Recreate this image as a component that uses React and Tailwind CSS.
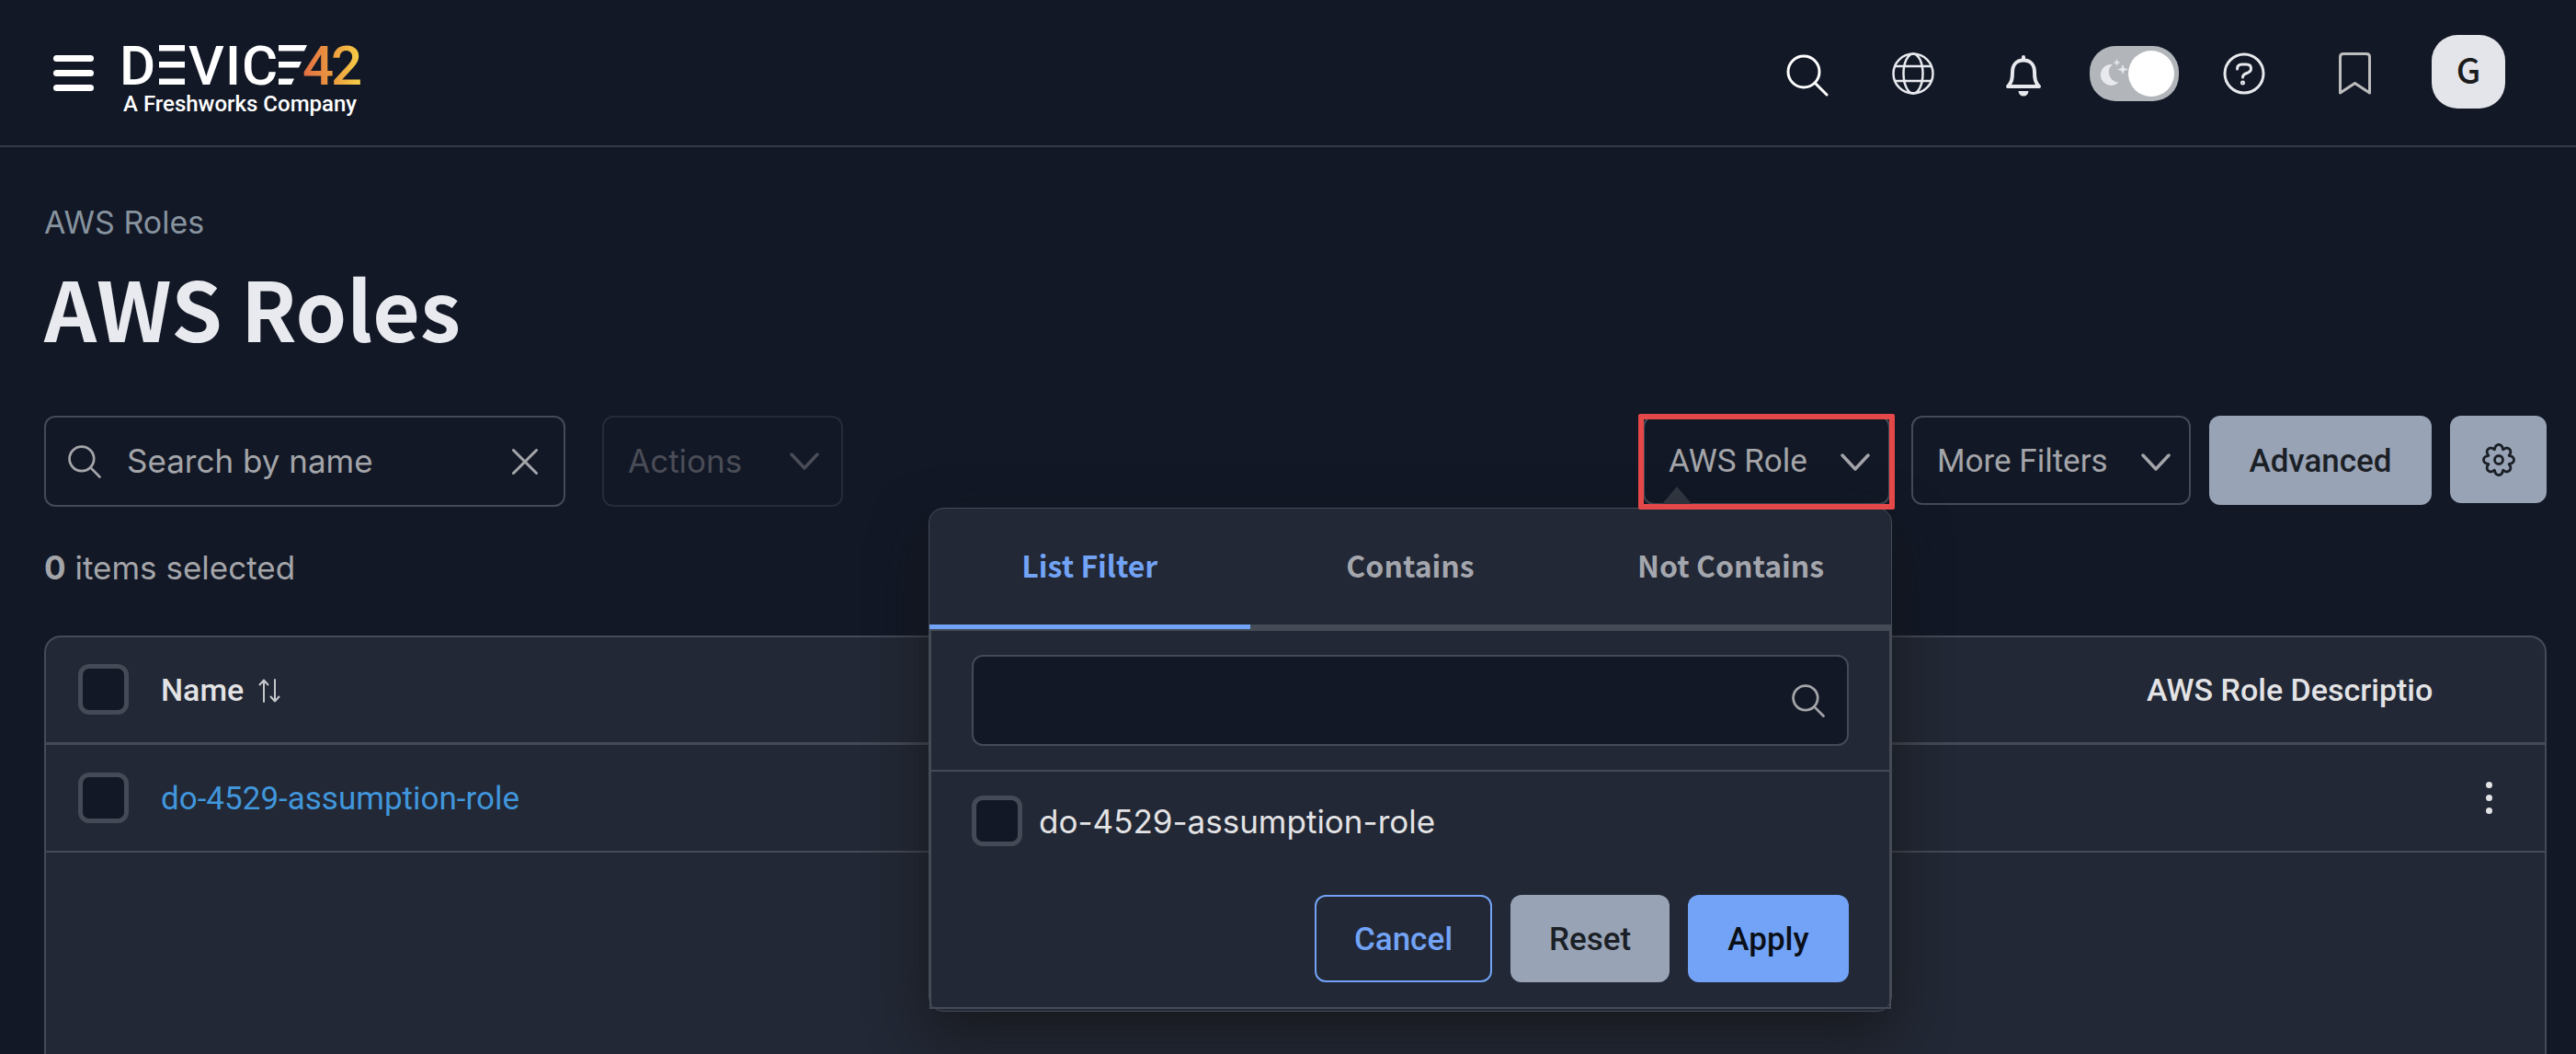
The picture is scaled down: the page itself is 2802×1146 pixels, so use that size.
import React from "react";

const BODY = "font-['Inter',sans-serif]";
const HEAD = "font-['Noto_Sans_CJK_SC',sans-serif]";
const UI = "font-['Roboto',sans-serif]";

// Outline of an eight-toothed cog centred in a 36-unit box.
const GEAR_OUTLINE =
  Array.from({ length: 128 }, (_, i) => {
    const angle = (i / 128) * Math.PI * 2;
    const theta = angle - 0.08 * Math.sin(8 * angle) * -1;
    const radius = 14.3 + 2.2 * Math.cos(8 * angle);
    const x = (18 + radius * Math.sin(theta)).toFixed(2);
    const y = (18 - radius * Math.cos(theta)).toFixed(2);
    return `${i ? "L" : "M"}${x} ${y}`;
  }).join("") + "z";

function SearchIcon({ className, strokeWidth = 3 }) {
  return (
    <svg viewBox="0 0 46 46" fill="none" stroke="currentColor" strokeWidth={strokeWidth} strokeLinecap="round" className={className} aria-hidden="true">
      <circle cx="19" cy="19" r="17" />
      <path d="M31.5 31.5 L44 44" />
    </svg>
  );
}

function Chevron({ className }) {
  return (
    <svg viewBox="0 0 32 20" fill="none" stroke="currentColor" strokeWidth="3.5" strokeLinecap="round" strokeLinejoin="round" className={className} aria-hidden="true">
      <path d="M2 2 L16 17 L30 2" />
    </svg>
  );
}

function Logo() {
  return (
    <a href="#home" aria-label="Device42, A Freshworks Company" className="flex flex-col">
      <svg viewBox="0 0 262 48" className="h-12 w-[262px] overflow-visible" role="img" aria-label="DEVICE42">
        <defs>
          <linearGradient id="four" gradientUnits="userSpaceOnUse" x1="197" y1="0" x2="260" y2="0">
            <stop offset="0" stopColor="#e36f45" />
            <stop offset="0.5" stopColor="#eb9a3e" />
            <stop offset="1" stopColor="#f8d148" />
          </linearGradient>
        </defs>
        <g fill="#fff" fontFamily="Roboto, sans-serif" fontSize="60" fontWeight="500">
          <text x="-3" y="45">D</text>
          <text x="72" y="45">V</text>
          <text x="112" y="45">I</text>
          <text x="130" y="45">C</text>
          <text x="196" y="45" fill="url(#four)">4</text>
          <text x="227" y="45" fill="url(#four)">2</text>
        </g>
        <g fill="#fff">
          <path d="M40 2h28v6.500h-28z M40 20h28v6.500h-28z M40 38.500h28v6.500h-28z" />
          <path d="M170 2h31l-3 6.500h-28z M170 20h25l-3 6.500h-22z M170 38.500h17l-3 6.500h-14z" />
        </g>
      </svg>
      <span className="mt-1 pl-px font-['Roboto',sans-serif] text-2xl leading-7 font-medium text-white">A Freshworks Company</span>
    </a>
  );
}

function Box({ id, label }) {
  return (
    <input
      id={id}
      type="checkbox"
      aria-label={label}
      className="block size-[55px] shrink-0 appearance-none rounded-xl border-[5px] border-[#444a56] bg-[#121826]"
    />
  );
}

function HeaderBar() {
  return (
    <header className="flex h-40 items-center border-b-2 border-[#353a48] pr-[77px] pl-[58px]">
      <button aria-label="Menu" className="mr-[31px] flex flex-col gap-[9px]">
        <span className="h-[7px] w-11 rounded-full bg-white" />
        <span className="h-[7px] w-11 rounded-full bg-white" />
        <span className="h-[7px] w-11 rounded-full bg-white" />
      </button>
      <div className="mt-4"><Logo /></div>
      <nav className="ml-auto flex items-center text-[#e8e9ee]">
        <button aria-label="Search" className="mr-[69px]">
          <SearchIcon className="mt-1.5 size-[46px] text-white" />
        </button>
        <button aria-label="Language" className="mr-[77px]">
          <svg viewBox="0 0 46 46" fill="none" stroke="currentColor" strokeWidth="2.500" className="mt-0.5 size-[46px]" aria-hidden="true">
            <circle cx="23" cy="23" r="21.500" />
            <ellipse cx="23" cy="23" rx="10.500" ry="21.500" />
            <path d="M3 15h40M3 31h40" />
          </svg>
        </button>
        <button aria-label="Notifications" className="mr-[52px]">
          <svg viewBox="0 0 40 46" className="mt-1.5 h-[46px] w-10" aria-hidden="true">
            <path d="M20 3v3M20 6.500c-8 0-12 5.500-12 13 0 8-1 11-5 15.500h34c-4-4.500-5-7.500-5-15.500 0-7.500-4-13-12-13z" fill="none" stroke="currentColor" strokeWidth="4" strokeLinejoin="round" strokeLinecap="round" />
            <path d="M14.500 40h11a5.500 5.500 0 0 1-11 0z" fill="currentColor" />
          </svg>
        </button>
        <button role="switch" aria-checked="true" aria-label="Dark mode" className="mt-0.5 mr-12 flex h-[60px] w-[97px] items-center rounded-[28px] bg-[#b2b6bb] pr-[5px] pl-[11px]">
          <svg viewBox="0 0 32 32" fill="#e8e9ee" className="size-8 shrink-0" aria-hidden="true">
            <path d="M14 6a11.500 11.500 0 1 0 6.500 19.500a11 11 0 0 1-6.500-19.500z" />
            <path d="M18.500 0l1 3 3 1-3 1-1 3-1-3-3-1 3-1z M25 6l1.500 4 4.500 1.500-4.500 1.500-1.500 4-1.500-4-4.500-1.500 4.500-1.500z" />
          </svg>
          <span className="-ml-px size-[50px] shrink-0 rounded-full bg-white" />
        </button>
        <button aria-label="Help" className="mr-20">
          <svg viewBox="0 0 46 46" fill="none" stroke="currentColor" strokeWidth="3" strokeLinecap="round" className="mt-0.5 size-[46px]" aria-hidden="true">
            <circle cx="23" cy="23" r="21" />
            <path d="M15.500 18q0-5 5-5h5q5 0 5 4.500 0 3.500-4.500 5t-4.500 4.500" />
            <circle cx="21.500" cy="33" r="1" />
          </svg>
        </button>
        <button aria-label="Bookmarks" className="mr-[66px] text-[#bdbdbd]">
          <svg viewBox="0 0 35 46" fill="none" stroke="currentColor" strokeWidth="3" strokeLinejoin="round" className="mt-0.5 h-[46px] w-[35px]" aria-hidden="true">
            <path d="M1.500 44V5q0-3.500 3.500-3.500h25q3.500 0 3.500 3.500v39L17.500 33.500z" />
          </svg>
        </button>
        <button className={`${HEAD} mb-0.5 flex size-20 items-center justify-center rounded-[28px] bg-[#e4e5ea] pb-2 text-[38px] font-medium text-[#1b1c1e]`}>G</button>
      </nav>
    </header>
  );
}

function Dropdown({ children, className }) {
  return (
    <button className={`flex items-center justify-between rounded-xl border-2 border-[#444a56] pt-1 pr-5 pl-[26px] text-[#a4a5a9] ${className}`}>
      <span>{children}</span>
      <Chevron className="h-5 w-8" />
    </button>
  );
}

function FilterPopup() {
  return (
    <div className="absolute top-full -right-0.5 z-10 mt-[3px] w-[1048px] rounded-2xl border border-[#444a56] bg-[#222835] pb-0.5 shadow-[0_24px_60px_rgba(20,20,22,0.75)]">
      <div role="tablist" className={`${HEAD} grid grid-cols-3 text-[32px] font-bold`}>
        <button role="tab" aria-selected="true" className="h-[131px] border-b-[5px] border-[#72a3f6] pb-1 text-[#72a3f6]">List Filter</button>
        <button role="tab" aria-selected="false" className="border-b-[5px] border-[#444a56] pb-1 text-[#a4a6ad]">Contains</button>
        <button role="tab" aria-selected="false" className="border-b-[5px] border-[#444a56] pb-1 text-[#a4a6ad]">Not Contains</button>
      </div>
      <div className="border-2 border-[#444a56]">
        <div className="border-b-2 border-[#444a56] px-11 py-[26px]">
          <label className="flex h-[99px] items-center rounded-xl border-2 border-[#444a56] bg-[#121826] pr-6 pl-6 text-[#a4a5a9]">
            <input type="text" aria-label="Filter roles" className="h-full flex-1 bg-transparent outline-none" />
            <SearchIcon className="size-9" strokeWidth={3.5} />
          </label>
        </div>
        <div className="flex items-center gap-[18px] px-11 pt-[26px]">
          <Box id="popup-role" label="do-4529-assumption-role" />
          <label htmlFor="popup-role" className={`${BODY} leading-[44px] font-normal text-[#e3e3e5]`}>do-4529-assumption-role</label>
        </div>
        <div className="flex justify-end gap-5 px-11 pt-[53px] pb-[27px] font-medium">
          <button className="h-[95px] w-[193px] rounded-xl border-2 border-[#72a3f6] pt-1 text-[#72a3f6]">Cancel</button>
          <button className="w-[173px] rounded-xl bg-[#98a3b6] pt-1 text-[#1b1f26]">Reset</button>
          <button className="w-[175px] rounded-xl bg-[#72a3f6] pt-1 text-[#0b0f18]">Apply</button>
        </div>
      </div>
    </div>
  );
}

export default function App() {
  return (
    <div className={`${BODY} flex h-screen flex-col overflow-hidden bg-[#121826] text-[35px]`}>
      <HeaderBar />
      <main className="flex flex-1 flex-col pr-8 pl-12">
        <nav aria-label="Breadcrumb" className="pt-[59px] text-[34px] leading-[46px] text-[#87939f]">
          <a href="#roles">AWS Roles</a>
        </nav>
        <h1 className={`${HEAD} pt-[11px] text-[89px] leading-[116px] font-bold text-[#e9eaef]`}>AWS Roles</h1>

        <div className="mt-[60px] flex h-[99px] items-start">
          <label className="flex h-[99px] w-[567px] items-center rounded-xl border-2 border-[#444a56] pr-7 pl-6 text-[#a4a5a9]">
            <SearchIcon className="size-9 shrink-0" strokeWidth={3.5} />
            <input type="text" aria-label="Search by name" placeholder="Search by name" className="ml-7 min-w-0 flex-1 bg-transparent outline-none placeholder:text-[#a4a5a9] placeholder:opacity-100" />
            <svg viewBox="0 0 28 28" stroke="currentColor" strokeWidth="3" strokeLinecap="round" className="size-7 shrink-0" aria-hidden="true">
              <path d="M1.500 1.500l25 25M26.500 1.500l-25 25" />
            </svg>
          </label>
          <button disabled className="ml-10 flex h-[99px] w-[262px] items-center justify-between rounded-xl border-2 border-[#252b38] pr-6 pl-[26px] text-[#4a4d57]">
            <span>Actions</span>
            <Chevron className="h-5 w-8" />
          </button>

          <div className={`${UI} ml-auto flex items-start gap-5`}>
            <div className="relative mr-[3px]">
              <Dropdown className="h-[97px] w-[269px]">AWS Role</Dropdown>
              <svg viewBox="0 0 34 20" className="absolute bottom-0 left-5 h-5 w-[34px]" aria-hidden="true">
                <path d="M0 20L17 0l17 20z" fill="#323843" />
              </svg>
              <FilterPopup />
              <span className="pointer-events-none absolute -inset-x-[5px] -top-0.5 -bottom-[5px] z-20 rounded-xs border-[6px] border-[#e54848]" />
            </div>
            <Dropdown className="h-[97px] w-[304px]">More Filters</Dropdown>
            <button className="h-[97px] w-[242px] rounded-xl bg-[#98a3b6] pt-1 font-medium text-[#1b1f26]">Advanced</button>
            <button aria-label="Settings" className="flex h-[95px] w-[105px] items-center justify-center rounded-xl bg-[#98a3b6] text-[#1b1f26]">
              <svg viewBox="0 0 36 36" fill="none" stroke="currentColor" strokeWidth="2.800" strokeLinejoin="round" className="size-9" aria-hidden="true">
                <circle cx="18" cy="18" r="4.500" />
                <path d={GEAR_OUTLINE} />
              </svg>
            </button>
          </div>
        </div>

        <p className="pt-[44px] leading-11 text-[#a4a5a9]"><b className="font-bold">0</b> items selected</p>

        <div className={`${UI} mt-[52px] flex-1 rounded-t-[18px] border-2 border-b-0 border-[#444a56] bg-[#222835]`}>
          <table className="w-full table-fixed border-collapse">
            <thead>
              <tr className="h-[115px] border-b-[3px] border-[#444a56] text-left text-[34px]">
                <th className="w-[125px] pl-[35px]"><Box label="Select all" /></th>
                <th className="pt-0.5 font-medium text-[#e3e3e5]">
                  <button className="flex items-center gap-4">
                    Name
                    <svg viewBox="0 0 24 26" fill="none" stroke="#c4c6ca" strokeWidth="2" strokeLinecap="round" strokeLinejoin="round" className="h-[26px] w-6" aria-hidden="true">
                      <path d="M6 25V1.500M1.500 6.500L6 1.500l4.500 5M18 1v23.500M13.500 19.500l4.500 5 4.500-5" />
                    </svg>
                  </button>
                </th>
                <th className="w-[313px] overflow-hidden pt-0.5 font-medium whitespace-nowrap text-[#e3e3e5]">AWS Role Description</th>
                <th className="w-[120px]"></th>
              </tr>
            </thead>
            <tbody>
              <tr className="h-[118px] border-b-2 border-[#444a56]">
                <td className="pl-[35px]"><Box label="Select do-4529-assumption-role" /></td>
                <td className="pt-1"><a href="#role" className="text-[#4196dc]">do-4529-assumption-role</a></td>
                <td></td>
                <td>
                  <button aria-label="Row actions" className="ml-14 flex flex-col gap-[7px]">
                    <span className="size-[7px] rounded-full bg-[#e3e3e5]" />
                    <span className="size-[7px] rounded-full bg-[#e3e3e5]" />
                    <span className="size-[7px] rounded-full bg-[#e3e3e5]" />
                  </button>
                </td>
              </tr>
            </tbody>
          </table>
        </div>
      </main>
    </div>
  );
}
